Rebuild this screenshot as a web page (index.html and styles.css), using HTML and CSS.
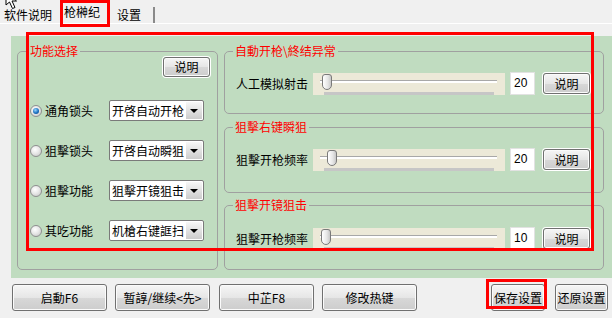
FILE: index.html
```html
<!DOCTYPE html>
<html>
<head>
<meta charset="utf-8">
<link rel="stylesheet" href="styles.css">
</head>
<body>
<svg class="cursor" width="14" height="10" viewBox="0 0 14 10"><path d="M1 -8 L1 5 L4.5 2 L7.5 8.5 L10 7.5 L7 1 L11.5 1 Z" fill="#fff" stroke="#000" stroke-width="1"/></svg>
<div class="tabs">
  <div class="tab tab1">软件说明</div>
  <div class="tab tab2">枪榊纪</div>
  <div class="tab tab3">设置</div>
</div>
<div class="panel">
  <fieldset class="group left">
    <legend>功能选择</legend>
    <div class="toprow"><button class="btn info">说明</button></div>
    <div class="opts">
      <div class="opt"><span class="radio on"></span><span class="optlabel">通角锁头</span><div class="select"><span>开啓自动开枪</span><i class="drop"></i></div></div>
      <div class="opt"><span class="radio"></span><span class="optlabel">狙擊锁头</span><div class="select"><span>开啓自动瞬狙</span><i class="drop"></i></div></div>
      <div class="opt"><span class="radio"></span><span class="optlabel">狙擊功能</span><div class="select"><span>狙擊开镜狙击</span><i class="drop"></i></div></div>
      <div class="opt"><span class="radio"></span><span class="optlabel">其吃功能</span><div class="select"><span>机槍右键誆扫</span><i class="drop"></i></div></div>
    </div>
  </fieldset>
  <div class="rightcol">
    <fieldset class="group g1">
      <legend>自動开枪\終结异常</legend>
      <div class="srow"><span class="slabel">人工模拟射击</span><div class="slider"><div class="track"></div><div class="ticks"></div><div class="thumb" style="left:9px"></div></div><div class="num">20</div><button class="btn info">说明</button></div>
    </fieldset>
    <fieldset class="group g2">
      <legend>狙擊右键瞬狙</legend>
      <div class="srow"><span class="slabel">狙擊开枪频率</span><div class="slider"><div class="track"></div><div class="ticks"></div><div class="thumb" style="left:14px"></div></div><div class="num">20</div><button class="btn info">说明</button></div>
    </fieldset>
    <fieldset class="group g3">
      <legend>狙擊开镜狙击</legend>
      <div class="srow"><span class="slabel">狙擊开枪频率</span><div class="slider"><div class="track"></div><div class="ticks"></div><div class="thumb" style="left:8px"></div></div><div class="num">10</div><button class="btn info">说明</button></div>
    </fieldset>
  </div>
</div>
<div class="bottom">
  <button class="btn big">启動F6</button>
  <button class="btn big">暂諄/继续&lt;先&gt;</button>
  <button class="btn big third">中芷F8</button>
  <button class="btn big">修改热键</button>
  <button class="btn small save">保存设置</button>
  <button class="btn small restore">还原设置</button>
</div>
<div class="mark mark-tab"></div>
<div class="mark mark-main"></div>
<div class="mark mark-save"></div>
</body>
</html>
```
FILE: styles.css
```css
* { box-sizing: border-box; }
html, body { margin: 0; padding: 0; }
body {
  width: 612px;
  height: 318px;
  overflow: hidden;
  position: relative;
  background: #f0f0f0;
  color: #000;
  font: 12px/16px "Noto Sans CJK SC", "Noto Sans", sans-serif;
}
.cursor { position: absolute; left: 5px; top: 0; }

/* tabs */
.tabs {
  display: flex;
  align-items: flex-end;
  height: 24px;
  padding-left: 4px;
  border-bottom: 1px solid #fff;
}
.tab { height: 16px; line-height: 16px; white-space: nowrap; }
.tab1 { padding-right: 6px; }
.tab2 { height: 19px; padding: 0 8px 3px 6px; }
.tab3 { padding: 0 12px 0 9px; border-right: 2px solid #8a8a8a; }

/* panel */
.panel {
  margin: 12px 0 0 11px;
  height: 242px;
  background: #c0dcc0;
  display: flex;
  gap: 6px;
  padding: 7px 0 0 6px;
}
.group {
  margin: 0;
  min-width: 0;
  border: 1px solid #a0a0a0;
  border-radius: 5px;
  padding: 0 0 0 8px;
}
.group legend {
  color: #f00;
  padding: 0 2px;
  line-height: 16px;
  white-space: nowrap;
}
.left { width: 201px; height: 227px; padding: 0 7px 0 10px; }
.toprow { display: flex; justify-content: flex-end; margin-top: -2px; }
.opts { display: flex; flex-direction: column; gap: 19px; margin-top: 23px; }
.opt { display: flex; align-items: center; height: 21px; padding-left: 2px; }
.radio {
  width: 12px; height: 12px;
  border-radius: 50%;
  border: 1px solid #8e8f8f;
  background: radial-gradient(circle at 40% 35%, #ffffff 0, #e8e8e8 45%, #c2c2c2 100%);
  display: flex; align-items: center; justify-content: center;
  flex: none;
}
.radio.on::after {
  content: "";
  width: 6px; height: 6px;
  border-radius: 50%;
  background: radial-gradient(circle at 40% 35%, #9ad8ff 0, #1a6fc0 55%, #0b3f7c 100%);
}
.optlabel { margin-left: 3px; width: 64px; white-space: nowrap; }
.select {
  width: 95px; height: 21px;
  border: 1px solid #7a7a7a;
  border-radius: 2px;
  background: #fff;
  display: flex; align-items: center; justify-content: space-between;
  padding: 0 1px 0 2px;
  white-space: nowrap;
}
.drop {
  width: 16px; height: 17px;
  background: linear-gradient(#f7f7f7, #cccccc);
  display: flex; align-items: center; justify-content: center;
}
.drop::after {
  content: "";
  border-top: 4px solid #000;
  border-left: 4px solid transparent;
  border-right: 4px solid transparent;
}

/* right column */
.rightcol { display: flex; flex-direction: column; width: 380px; }
.g1 { height: 71px; padding-top: 13px; }
.g2 { height: 74px; margin-top: 5px; padding-top: 13px; }
.g3 { height: 73px; margin-top: 4px; padding-top: 14px; }
.srow { display: flex; align-items: center; height: 23px; margin-left: 3px; }
.slabel { width: 77px; white-space: nowrap; }
.slider { width: 192px; height: 22px; background: #ece9d8; position: relative; }
.track {
  position: absolute; left: 7px; top: 7px;
  width: 177px; height: 3px;
  border-top: 1px solid #a8a8a8;
  background: #fff;
}
.ticks {
  position: absolute; left: 11px; top: 19px;
  width: 170px; height: 3px;
  background: #c6c6c6;
}
.thumb {
  position: absolute; top: 1px;
  width: 10px; height: 16px;
  border: 1px solid #7a7a7a;
  border-radius: 3px 3px 5px 5px;
  background: linear-gradient(90deg, #ffffff, #e6e6e6 60%, #c8c8c8);
}
.num {
  width: 25px; height: 23px;
  margin-left: 5px;
  background: #fff;
  border: 1px solid #e2e2e2;
  padding: 2px 0 0 3px;
  font: 12px/16px "Liberation Sans", sans-serif;
}

/* buttons */
.btn {
  font: inherit;
  color: #000;
  padding: 0;
  border: 1px solid #707070;
  border-radius: 3px;
  background: linear-gradient(#f6f6f6, #e6e6e6 50%, #d8d8d8 51%, #cdcdcd);
  box-shadow: inset 0 0 0 1px #fbfbfb;
  line-height: 16px;
  white-space: nowrap;
}
.info {
  width: 47px; height: 20px;
  box-shadow: 0 0 0 1px #fff, inset 0 0 0 1px #fbfbfb;
}
.srow .info { height: 21px; margin-left: 8px; }
.bottom { display: flex; gap: 8px; padding: 6px 0 0 12px; }
.big { width: 95px; height: 27px; }
.third { margin-left: 1px; }
.small { width: 54px; height: 27px; }
.save { margin-left: 66px; }
.restore { margin-left: 2px; width: 53px; }

/* annotation boxes */
.mark { position: absolute; border: 3px solid #f00; }
.mark-tab { left: 60px; top: 0; width: 50px; height: 27px; }
.mark-main { left: 26px; top: 32px; width: 568px; height: 219px; }
.mark-save { left: 486px; top: 279px; width: 61px; height: 30px; }
```
